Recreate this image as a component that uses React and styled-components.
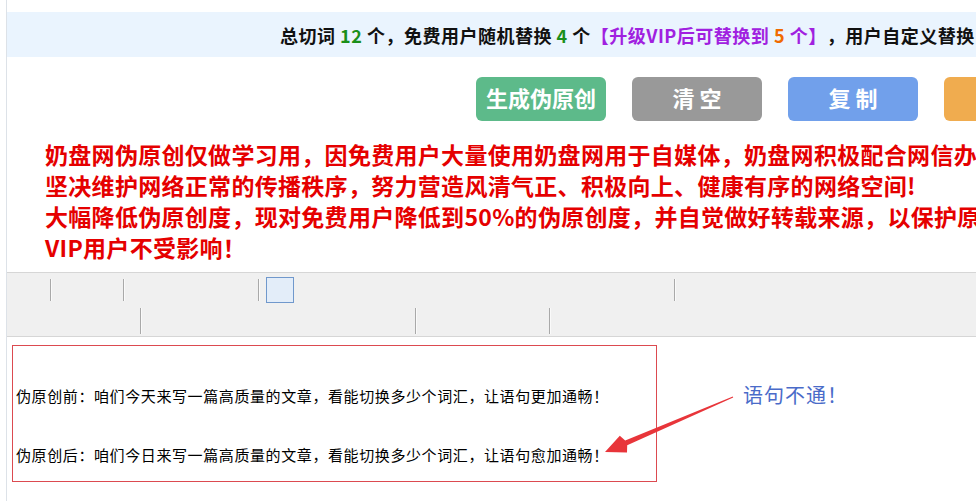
import React from "react";
import styled, { createGlobalStyle } from "styled-components";

const Global = createGlobalStyle`
  html, body { margin: 0; padding: 0; background: #fff; }
  body { font-family: "Noto Sans CJK SC", "Noto Sans", sans-serif; }
`;

const Page = styled.div`
  margin-left: 6px;
  border-left: 1px solid #dde2e8;
  min-height: 501px;
  padding-top: 12px;
  overflow: hidden;
  box-sizing: border-box;
`;

const InfoBar = styled.div`
  height: 45px;
  background: #eaf4fe;
  display: flex;
  align-items: center;
  padding-left: 273px;
  white-space: nowrap;
  font-size: 18px;
  font-weight: 700;
  letter-spacing: 0.5px;
  color: #111;
`;

const Hl = styled.span`
  color: ${(p) => p.$c};
`;

const ButtonRow = styled.div`
  display: flex;
  gap: 26px;
  padding-left: 469px;
  margin-top: 20px;
`;

const Btn = styled.button`
  flex: none;
  width: 130px;
  height: 44px;
  border: none;
  border-radius: 6px;
  background: ${(p) => p.$bg};
  color: #fff;
  font-family: "Noto Sans CJK SC", sans-serif;
  font-size: 22px;
  font-weight: 700;
  line-height: 40px;
  letter-spacing: ${(p) => p.$ls || 0}px;
  padding: 0 0 4px ${(p) => p.$ls || 0}px;
`;

const Notice = styled.div`
  margin-top: 18px;
  padding-left: 38px;
  color: #e50000;
  font-size: 23px;
  font-weight: 700;
  line-height: 31px;
  letter-spacing: 0.3px;
  white-space: nowrap;
`;

const Toolbar = styled.div`
  margin-top: 9px;
  height: 65px;
  box-sizing: border-box;
  border-top: 1px solid #d6d6d6;
  border-bottom: 1px solid #d6d6d6;
  background: #f0f0f0;
  padding-top: 4px;
  display: flex;
  flex-direction: column;
  gap: 4px;
`;

const ToolRow = styled.div`
  display: flex;
  align-items: center;
  height: ${(p) => p.$h}px;
`;

const Slot = styled.div`
  flex: none;
  width: ${(p) => p.$w}px;
`;

const Sep = styled.div`
  flex: none;
  width: 1px;
  height: ${(p) => p.$h || 22}px;
  background: #a9a9a9;
  box-shadow: 1px 0 0 #fafafa;
`;

const ActiveBtn = styled.div`
  flex: none;
  width: 28px;
  height: 26px;
  box-sizing: border-box;
  border: 1px solid #7098cc;
  background: #e3edf9;
`;

const ExampleRow = styled.div`
  position: relative;
  display: flex;
  align-items: flex-start;
  margin-top: 8px;
`;

const ExampleBox = styled.div`
  flex: none;
  margin-left: 5px;
  width: 645px;
  height: 137px;
  box-sizing: border-box;
  border: 1px solid #dc4a50;
  padding: 0 3px;
`;

const ExampleLine = styled.p`
  margin: ${(p) => p.$mt}px 0 0;
  font-size: 15px;
  line-height: 20px;
  letter-spacing: 0.6px;
  color: #000;
  white-space: nowrap;
`;

const Note = styled.div`
  flex: none;
  margin-left: 86px;
  margin-top: 37px;
  font-size: 20px;
  line-height: 26px;
  letter-spacing: 1px;
  color: #4a6bc9;
`;

const Arrow = styled.svg`
  position: absolute;
  left: 583px;
  top: 40px;
  width: 150px;
  height: 75px;
  overflow: visible;
`;

export default function App() {
  return (
    <>
      <Global />
      <Page>
        <InfoBar>
          总切词&nbsp;<Hl $c="#1a8f1a">12</Hl>&nbsp;个，免费用户随机替换&nbsp;
          <Hl $c="#1a8f1a">4</Hl>&nbsp;个
          <Hl $c="#a020e0">
            【升级VIP后可替换到&nbsp;<Hl $c="#f06a00">5</Hl>&nbsp;个】
          </Hl>
          ，用户自定义替换
        </InfoBar>

        <ButtonRow>
          <Btn $bg="#5dba8a">生成伪原创</Btn>
          <Btn $bg="#999999" $ls={5}>清空</Btn>
          <Btn $bg="#71a0eb" $ls={5}>复制</Btn>
          <Btn $bg="#f0ac4f" aria-label="下载" />
        </ButtonRow>

        <Notice>
          <div>奶盘网伪原创仅做学习用，因免费用户大量使用奶盘网用于自媒体，奶盘网积极配合网信办</div>
          <div>坚决维护网络正常的传播秩序，努力营造风清气正、积极向上、健康有序的网络空间!</div>
          <div>大幅降低伪原创度，现对免费用户降低到50%的伪原创度，并自觉做好转载来源，以保护原</div>
          <div>VIP用户不受影响！</div>
        </Notice>

        <Toolbar>
          <ToolRow $h={26}>
            <Slot $w={43} />
            <Sep />
            <Slot $w={72} />
            <Sep />
            <Slot $w={134} />
            <Sep />
            <Slot $w={7} />
            <ActiveBtn />
            <Slot $w={380} />
            <Sep />
          </ToolRow>
          <ToolRow $h={28}>
            <Slot $w={133} />
            <Sep $h={26} />
            <Slot $w={274} />
            <Sep $h={26} />
            <Slot $w={133} />
            <Sep $h={26} />
          </ToolRow>
        </Toolbar>

        <ExampleRow>
          <ExampleBox>
            <ExampleLine $mt={40}>
              伪原创前：咱们今天来写一篇高质量的文章，看能切换多少个词汇，让语句更加通畅！
            </ExampleLine>
            <ExampleLine $mt={39}>
              伪原创后：咱们今日来写一篇高质量的文章，看能切换多少个词汇，让语句愈加通畅！
            </ExampleLine>
          </ExampleBox>
          <Note>语句不通！</Note>
          <Arrow viewBox="0 0 150 75">
            <polygon
              fill="#e8353a"
              points="15,67 29.8,50.8 35.2,55.6 142.8,11.5 143.2,12.5 37.2,60.2 37,67.4"
            />
          </Arrow>
        </ExampleRow>
      </Page>
    </>
  );
}
